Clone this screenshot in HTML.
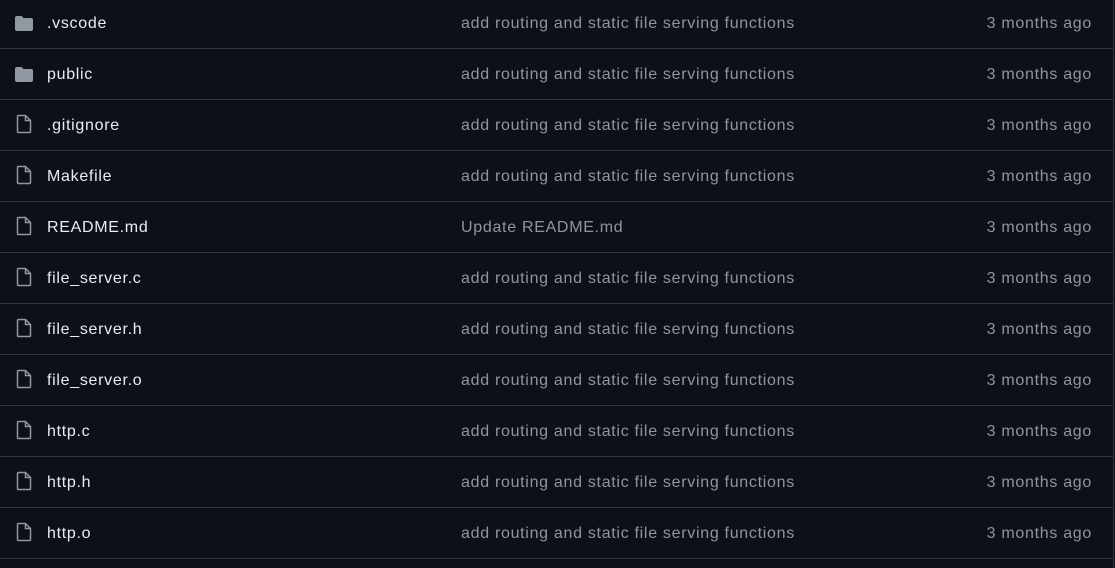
<!DOCTYPE html>
<html style="overflow:hidden;height:568px"><head><style>
html,body{margin:0;background:#0d1117;width:1115px;height:568px;overflow:hidden}
body{font-family:"Liberation Sans",sans-serif;font-size:16px;letter-spacing:0.7px;position:relative}
.wrap{position:absolute;top:-2px;left:0;width:1113px;border-right:1px solid #30363d;height:570px;overflow:hidden}
.row{height:50px;border-bottom:1px solid #30363d;position:relative}
.row svg{position:absolute;left:14px;top:17px}
.n{position:absolute;left:47px;top:17px;color:#e6edf3}
.m{position:absolute;left:461px;top:17px;color:#8d96a0}
.t{position:absolute;right:21px;top:17px;color:#8d96a0}
</style></head><body><div class="wrap">
<div class="row"><svg width="20" height="18" viewBox="0 0 20 18"><path d="M1 3a2 2 0 0 1 2-2h4.5l2 2H17a2 2 0 0 1 2 2v9a2 2 0 0 1-2 2H3a2 2 0 0 1-2-2z" fill="#9198a1"/></svg><span class="n">.vscode</span><span class="m">add routing and static file serving functions</span><span class="t">3 months ago</span></div>
<div class="row"><svg width="20" height="18" viewBox="0 0 20 18"><path d="M1 3a2 2 0 0 1 2-2h4.5l2 2H17a2 2 0 0 1 2 2v9a2 2 0 0 1-2 2H3a2 2 0 0 1-2-2z" fill="#9198a1"/></svg><span class="n">public</span><span class="m">add routing and static file serving functions</span><span class="t">3 months ago</span></div>
<div class="row"><svg width="20" height="20" viewBox="0 0 20 20" style="top:14px"><path d="M4.5 1.5h7l5 5v11a1 1 0 0 1-1 1h-11a1 1 0 0 1-1-1v-15a1 1 0 0 1 1-1zM11.5 1.5v5h5" fill="none" stroke="#9198a1" stroke-width="1.5"/></svg><span class="n">.gitignore</span><span class="m">add routing and static file serving functions</span><span class="t">3 months ago</span></div>
<div class="row"><svg width="20" height="20" viewBox="0 0 20 20" style="top:14px"><path d="M4.5 1.5h7l5 5v11a1 1 0 0 1-1 1h-11a1 1 0 0 1-1-1v-15a1 1 0 0 1 1-1zM11.5 1.5v5h5" fill="none" stroke="#9198a1" stroke-width="1.5"/></svg><span class="n">Makefile</span><span class="m">add routing and static file serving functions</span><span class="t">3 months ago</span></div>
<div class="row"><svg width="20" height="20" viewBox="0 0 20 20" style="top:14px"><path d="M4.5 1.5h7l5 5v11a1 1 0 0 1-1 1h-11a1 1 0 0 1-1-1v-15a1 1 0 0 1 1-1zM11.5 1.5v5h5" fill="none" stroke="#9198a1" stroke-width="1.5"/></svg><span class="n">README.md</span><span class="m">Update README.md</span><span class="t">3 months ago</span></div>
<div class="row"><svg width="20" height="20" viewBox="0 0 20 20" style="top:14px"><path d="M4.5 1.5h7l5 5v11a1 1 0 0 1-1 1h-11a1 1 0 0 1-1-1v-15a1 1 0 0 1 1-1zM11.5 1.5v5h5" fill="none" stroke="#9198a1" stroke-width="1.5"/></svg><span class="n">file_server.c</span><span class="m">add routing and static file serving functions</span><span class="t">3 months ago</span></div>
<div class="row"><svg width="20" height="20" viewBox="0 0 20 20" style="top:14px"><path d="M4.5 1.5h7l5 5v11a1 1 0 0 1-1 1h-11a1 1 0 0 1-1-1v-15a1 1 0 0 1 1-1zM11.5 1.5v5h5" fill="none" stroke="#9198a1" stroke-width="1.5"/></svg><span class="n">file_server.h</span><span class="m">add routing and static file serving functions</span><span class="t">3 months ago</span></div>
<div class="row"><svg width="20" height="20" viewBox="0 0 20 20" style="top:14px"><path d="M4.5 1.5h7l5 5v11a1 1 0 0 1-1 1h-11a1 1 0 0 1-1-1v-15a1 1 0 0 1 1-1zM11.5 1.5v5h5" fill="none" stroke="#9198a1" stroke-width="1.5"/></svg><span class="n">file_server.o</span><span class="m">add routing and static file serving functions</span><span class="t">3 months ago</span></div>
<div class="row"><svg width="20" height="20" viewBox="0 0 20 20" style="top:14px"><path d="M4.5 1.5h7l5 5v11a1 1 0 0 1-1 1h-11a1 1 0 0 1-1-1v-15a1 1 0 0 1 1-1zM11.5 1.5v5h5" fill="none" stroke="#9198a1" stroke-width="1.5"/></svg><span class="n">http.c</span><span class="m">add routing and static file serving functions</span><span class="t">3 months ago</span></div>
<div class="row"><svg width="20" height="20" viewBox="0 0 20 20" style="top:14px"><path d="M4.5 1.5h7l5 5v11a1 1 0 0 1-1 1h-11a1 1 0 0 1-1-1v-15a1 1 0 0 1 1-1zM11.5 1.5v5h5" fill="none" stroke="#9198a1" stroke-width="1.5"/></svg><span class="n">http.h</span><span class="m">add routing and static file serving functions</span><span class="t">3 months ago</span></div>
<div class="row"><svg width="20" height="20" viewBox="0 0 20 20" style="top:14px"><path d="M4.5 1.5h7l5 5v11a1 1 0 0 1-1 1h-11a1 1 0 0 1-1-1v-15a1 1 0 0 1 1-1zM11.5 1.5v5h5" fill="none" stroke="#9198a1" stroke-width="1.5"/></svg><span class="n">http.o</span><span class="m">add routing and static file serving functions</span><span class="t">3 months ago</span></div>
</div></body></html>
